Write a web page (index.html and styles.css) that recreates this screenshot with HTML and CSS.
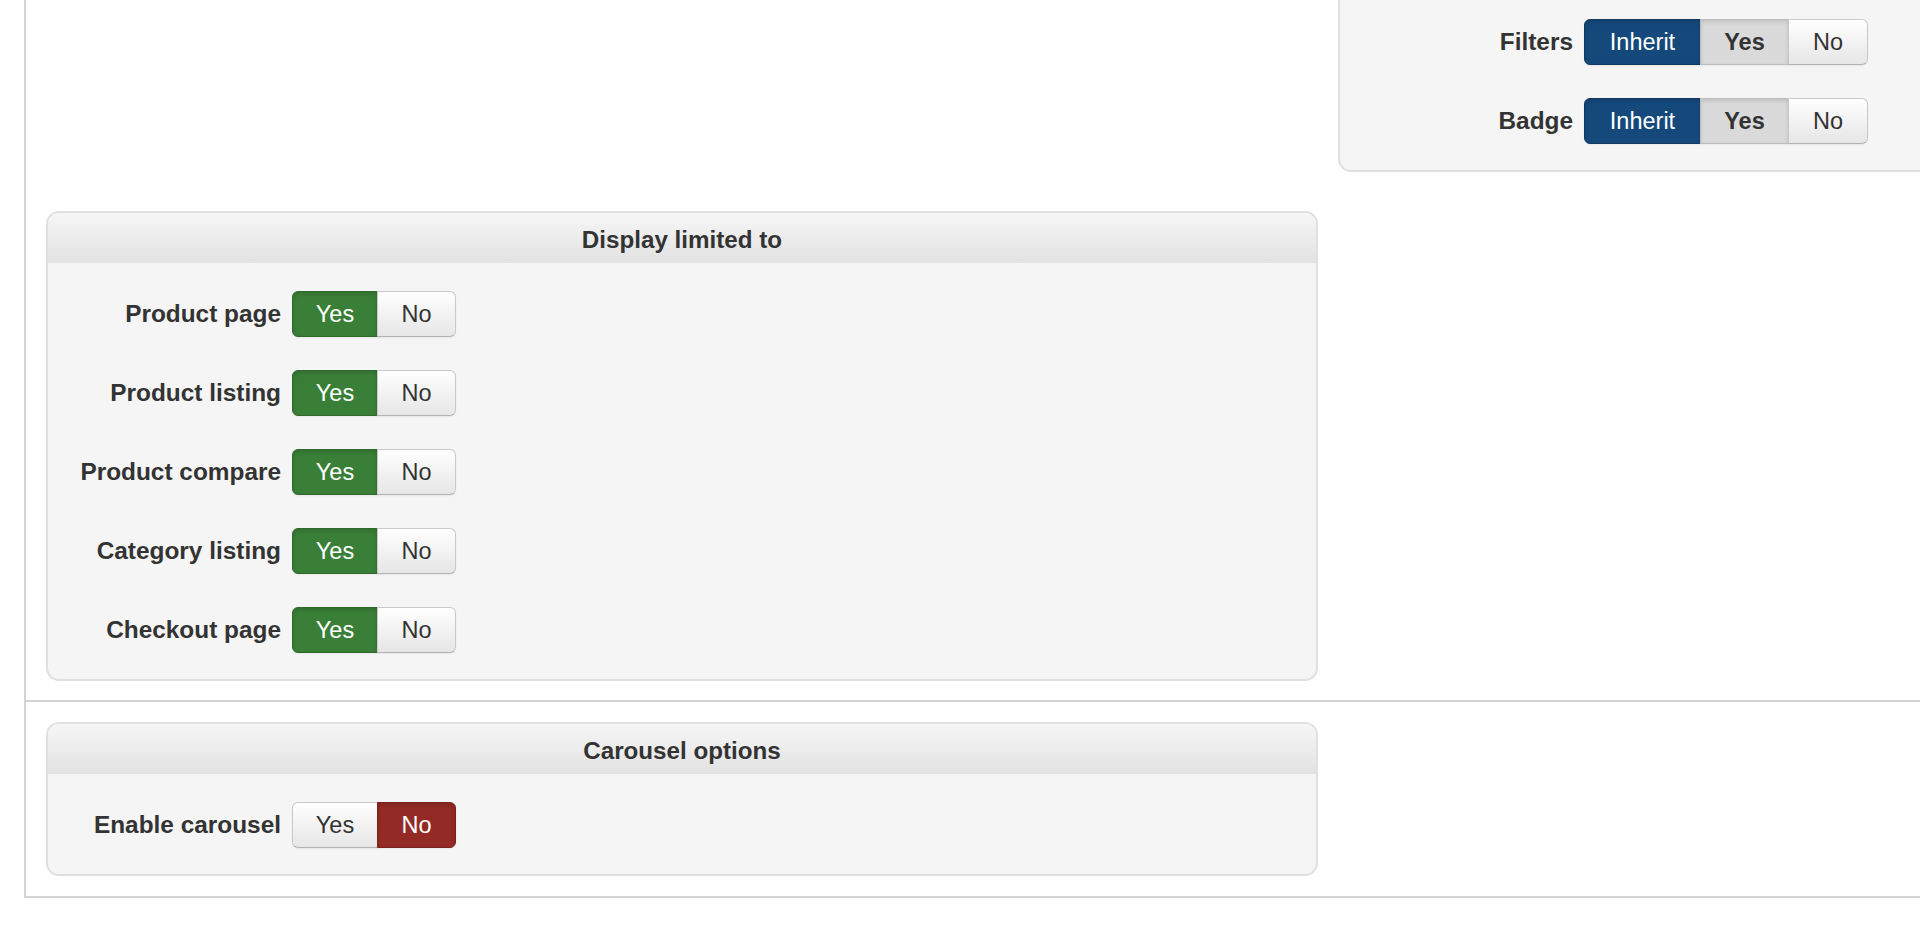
FILE: index.html
```html
<!DOCTYPE html>
<html lang="en">
<head>
<meta charset="utf-8">
<title>Module options</title>
<link rel="stylesheet" href="styles.css">
</head>
<body>
<div class="page">
  <section class="block block-first">
    <div class="cell"></div>
    <div class="panel panel-cut">
      <div class="panel-body">
        <div class="field">
          <label class="field-label">Filters</label>
          <div class="btn-group">
            <span class="btn w-inherit is-primary">Inherit</span>
            <span class="btn w-yes-lg is-pressed">Yes</span>
            <span class="btn w-no-lg">No</span>
          </div>
        </div>
        <div class="field">
          <label class="field-label">Badge</label>
          <div class="btn-group">
            <span class="btn w-inherit is-primary">Inherit</span>
            <span class="btn w-yes-lg is-pressed">Yes</span>
            <span class="btn w-no-lg">No</span>
          </div>
        </div>
      </div>
    </div>

    <div class="panel">
      <div class="panel-head">Display limited to</div>
      <div class="panel-body">
        <div class="field">
          <label class="field-label">Product page</label>
          <div class="btn-group">
            <span class="btn w-yes is-success">Yes</span>
            <span class="btn w-no">No</span>
          </div>
        </div>
        <div class="field">
          <label class="field-label">Product listing</label>
          <div class="btn-group">
            <span class="btn w-yes is-success">Yes</span>
            <span class="btn w-no">No</span>
          </div>
        </div>
        <div class="field">
          <label class="field-label">Product compare</label>
          <div class="btn-group">
            <span class="btn w-yes is-success">Yes</span>
            <span class="btn w-no">No</span>
          </div>
        </div>
        <div class="field">
          <label class="field-label">Category listing</label>
          <div class="btn-group">
            <span class="btn w-yes is-success">Yes</span>
            <span class="btn w-no">No</span>
          </div>
        </div>
        <div class="field">
          <label class="field-label">Checkout page</label>
          <div class="btn-group">
            <span class="btn w-yes is-success">Yes</span>
            <span class="btn w-no">No</span>
          </div>
        </div>
      </div>
    </div>
    <div class="cell"></div>
  </section>

  <section class="block block-second">
    <div class="panel">
      <div class="panel-head">Carousel options</div>
      <div class="panel-body">
        <div class="field">
          <label class="field-label">Enable carousel</label>
          <div class="btn-group">
            <span class="btn w-yes">Yes</span>
            <span class="btn w-no is-danger">No</span>
          </div>
        </div>
      </div>
    </div>
  </section>
</div>
</body>
</html>
```

FILE: styles.css
```css
html, body {
  margin: 0;
  padding: 0;
  overflow: hidden;
  background: #ffffff;
}

body {
  width: 1920px;
  height: 928px;
  font-family: "Liberation Sans", Arial, Helvetica, sans-serif;
  color: #333333;
}

.page {
  margin-left: 24px;
  width: 2640px;
  border-left: 2px solid #d4d4d4;
  border-bottom: 2px solid #d4d4d4;
}

.block {
  display: grid;
  grid-template-columns: 1272px 1272px;
  column-gap: 20px;
  row-gap: 39px;
  padding: 0 20px 19px 20px;
}

.block-second {
  border-top: 2px solid #d4d4d4;
  padding: 20px;
}

.panel {
  box-sizing: border-box;
  border: 2px solid #e0e0e0;
  border-radius: 13px;
  background: #f5f5f5;
  overflow: hidden;
}

.panel-cut {
  border-top: 0;
  border-radius: 0 0 13px 13px;
}

.panel-head {
  height: 46px;
  padding-top: 4px;
  line-height: 46px;
  text-align: center;
  font-size: 24.2px;
  font-weight: bold;
  color: #333333;
  background: linear-gradient(#f6f6f6, #e2e2e2);
}

.panel-body {
  display: flex;
  flex-direction: column;
  gap: 33px;
  padding: 28px 0 26px 0;
}

.panel-cut .panel-body {
  padding-top: 19px;
}

.field {
  display: flex;
  align-items: center;
  height: 46px;
}

.field-label {
  width: 233px;
  margin-right: 11px;
  text-align: right;
  font-size: 24.4px;
  font-weight: bold;
  color: #333333;
  white-space: nowrap;
}

.btn-group {
  display: flex;
}

.btn {
  box-sizing: border-box;
  height: 46px;
  line-height: 45px;
  font-size: 23.5px;
  text-align: center;
  color: #333333;
  border: 1px solid #c9c9c9;
  border-bottom-color: #b3b3b3;
  background: linear-gradient(#ffffff, #e6e6e6);
  box-shadow: inset 0 1px 0 rgba(255, 255, 255, 0.2), 0 1px 2px rgba(0, 0, 0, 0.06);
}

.btn + .btn {
  margin-left: -1px;
}

.btn:first-child {
  border-radius: 6px 0 0 6px;
}

.btn:last-child {
  border-radius: 0 6px 6px 0;
}

.w-inherit { width: 117px; }
.w-yes { width: 86px; }
.w-no { width: 79px; }
.w-yes-lg { width: 89px; }
.w-no-lg { width: 80px; }

.is-success {
  color: #ffffff;
  background: #3a7f37;
  border-color: #2f6a2d;
  box-shadow: inset 0 2px 4px rgba(0, 0, 0, 0.15), 0 1px 2px rgba(0, 0, 0, 0.05);
}

.is-danger {
  color: #ffffff;
  background: #942a25;
  border-color: #7a221e;
  box-shadow: inset 0 2px 4px rgba(0, 0, 0, 0.15), 0 1px 2px rgba(0, 0, 0, 0.05);
}

.is-primary {
  color: #ffffff;
  background: #15497c;
  border-color: #103a63;
  box-shadow: inset 0 2px 4px rgba(0, 0, 0, 0.15), 0 1px 2px rgba(0, 0, 0, 0.05);
}

.is-pressed {
  font-weight: bold;
  background: #dadada;
  border-color: #bdbdbd;
  box-shadow: inset 0 2px 4px rgba(0, 0, 0, 0.12), 0 1px 2px rgba(0, 0, 0, 0.05);
}
```
